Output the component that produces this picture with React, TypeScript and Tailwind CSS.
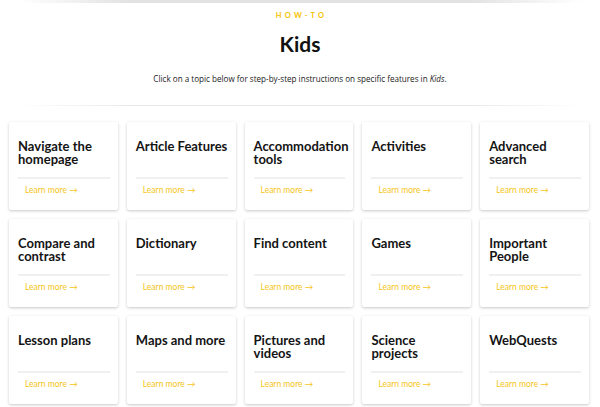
import React from "react";

// line breaks follow the reference's wrapping
const topics = [
  "Navigate the\nhomepage",
  "Article Features",
  "Accommodation\ntools",
  "Activities",
  "Advanced\nsearch",
  "Compare and\ncontrast",
  "Dictionary",
  "Find content",
  "Games",
  "Important\nPeople",
  "Lesson plans",
  "Maps and more",
  "Pictures and\nvideos",
  "Science\nprojects",
  "WebQuests",
];

const TopicCard = ({ title }: { title: string }) => (
  <div className="h-[88px] bg-white rounded-[2px] shadow-[0_1px_3px_rgba(0,0,0,0.22)] pl-[9px] pr-[8px] pt-[18px] flex flex-col">
    <h3 className="h-[37px] text-[13px] leading-[13px] font-bold text-[#141414] whitespace-pre">
      {title}
    </h3>
    <hr className="border-t-2 border-[#f0f0f0]" />
    <a
      href="#"
      className="mt-[5px] ml-[7px] text-[8.5px] leading-[12px] text-[#f5c518]"
    >
      Learn more →
    </a>
  </div>
);

export default function App() {
  return (
    <div className="w-[600px] h-[407px] bg-white overflow-hidden font-['Lato',sans-serif]">
      <div className="mx-[18px] h-[3px] bg-[linear-gradient(to_right,transparent,#e2e2e2_20%,#e2e2e2_80%,transparent)]" />
      <div className="text-center">
        <p className="mt-[7px] text-[7.5px] font-bold tracking-[3.2px] text-[#f7c100] pl-[3px]">
          HOW-TO
        </p>
        <h1 className="mt-[11px] text-[21px] leading-[24px] font-bold text-[#111]">Kids</h1>
        <p className="mt-[17px] text-[8.1px] text-[#222] font-['Open_Sans',sans-serif]">
          Click on a topic below for step-by-step instructions on specific features in <i>Kids</i>.
        </p>
      </div>
      <div className="mt-[20px] mx-[18px] h-[1px] bg-[linear-gradient(to_right,transparent,#e8e8e8_20%,#e8e8e8_80%,transparent)]" />
      <div className="mt-[16px] ml-[9px] mr-[11px] grid grid-cols-5 gap-x-[9px] gap-y-[9px]">
        {topics.map((t) => (
          <TopicCard key={t} title={t} />
        ))}
      </div>
    </div>
  );
}
